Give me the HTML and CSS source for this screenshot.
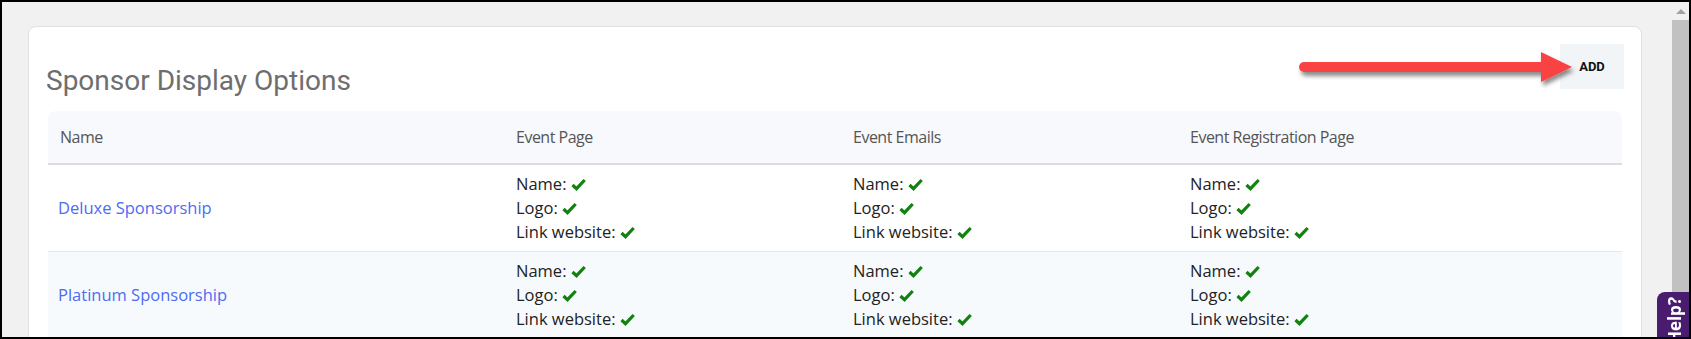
FILE: index.html
```html
<!DOCTYPE html>
<html>
<link rel="stylesheet" href="styles.css">

<head>
    <title>Sponsor Display Options</title>
</head>

<body>

    <div class="Frame">
        <div class="Main">
            <div class="Card">
                <div class="CardHeader">
                    <h2 class="Title">Sponsor Display Options</h2>
                    <button class="AddButton">ADD</button>
                </div>

                <table class="OptionsTable">
                    <colgroup>
                        <col style="width: 456px">
                        <col style="width: 337px">
                        <col style="width: 337px">
                        <col>
                    </colgroup>
                    <thead>
                        <tr>
                            <th>Name</th>
                            <th>Event Page</th>
                            <th>Event Emails</th>
                            <th>Event Registration Page</th>
                        </tr>
                    </thead>
                    <tbody id="OptionsBody"></tbody>
                </table>
            </div>
        </div>

        <div class="Scrollbar">
            <div class="ScrollUp"></div>
            <div class="ScrollThumb"></div>
        </div>

        <svg class="Arrow" width="290" height="44" viewBox="0 0 290 44">
            <defs>
                <filter id="ArrowShadow" x="-10%" y="-40%" width="120%" height="200%">
                    <feDropShadow dx="2" dy="4" stdDeviation="2.2" flood-color="#000" flood-opacity="0.45"/>
                </filter>
            </defs>
            <g filter="url(#ArrowShadow)" fill="#f94242">
                <rect x="4" y="14" width="250" height="10" rx="5"/>
                <polygon points="246,4 277,19 246,34"/>
            </g>
        </svg>

        <div class="HelpTab"><span class="HelpText">Need Help?</span></div>
    </div>

    <script>
        const sponsors = ["Deluxe Sponsorship", "Platinum Sponsorship"];
        const places = 3;
        const OptionsBody = document.getElementById("OptionsBody");

        const check = '<svg class="Check" width="15" height="13" viewBox="0 0 15 13">' +
            '<polyline points="1.5,7 5.5,10.7 13.7,2" fill="none" stroke="#12820f" stroke-width="3.2"/></svg>';

        function optionCell() {
            return `<td class="Options">
                <div>Name: ${check}</div>
                <div>Logo: ${check}</div>
                <div>Link website: ${check}</div>
            </td>`;
        }

        sponsors.forEach(name => {
            const row = document.createElement("tr");
            let html = `<td><a href="#" class="SponsorLink">${name}</a></td>`;
            for (let i = 0; i < places; i++) {
                html += optionCell();
            }
            row.innerHTML = html;
            OptionsBody.appendChild(row);
        });
    </script>

</body>
</html>
```

FILE: styles.css
```css
html, body {
    margin: 0;
    padding: 0;
}

body {
    font-family: "Open Sans", "Liberation Sans", sans-serif;
    background: #f1f1f1;
}

.Frame {
    position: relative;
    display: flex;
    width: 1691px;
    height: 339px;
    box-sizing: border-box;
    border: 2px solid #000;
    overflow: hidden;
    background: #f1f1f1;
}

.Main {
    flex: 1;
    padding: 24px 30px 0 26px;
}

.Card {
    background: #fff;
    border: 1px solid #e1e1e1;
    border-radius: 8px;
    padding: 17px 17px 40px 17px;
}

.CardHeader {
    display: flex;
    justify-content: space-between;
    align-items: flex-start;
}

.Title {
    font-family: Roboto, "Liberation Sans", sans-serif;
    font-weight: 400;
    font-size: 28px;
    line-height: 32px;
    color: #6e6e6e;
    margin: 21px 0 0 0;
}

.AddButton {
    width: 64px;
    height: 45px;
    border: none;
    background: #f2f5f8;
    font-family: Roboto, "Liberation Sans", sans-serif;
    font-weight: 700;
    font-size: 13px;
    color: #111;
    padding: 0;
}

.OptionsTable {
    width: calc(100% - 4px);
    margin: 14px 2px 0 2px;
    table-layout: fixed;
    border-collapse: separate;
    border-spacing: 0;
    font-size: 16.5px;
}

.OptionsTable th {
    background: #f7f9fc;
    font-weight: 400;
    font-size: 16px;
    color: #555;
    text-align: left;
    height: 54px;
    padding: 0 12px;
    box-sizing: border-box;
    border-bottom: 2px solid #dcdcdc;
    letter-spacing: -0.5px;
}

.OptionsTable th:first-child {
    border-top-left-radius: 8px;
}

.OptionsTable th:last-child {
    border-top-right-radius: 8px;
}

.OptionsTable td {
    padding: 7px 12px;
    border-bottom: 1px solid #e8e8e8;
    vertical-align: middle;
    color: #222;
    line-height: 24px;
}

.OptionsTable tbody tr:nth-child(even) td {
    background: #f7fafd;
}

.SponsorLink {
    color: #4d6cf2;
    text-decoration: none;
    margin-left: -2px;
}

.Check {
    vertical-align: -1px;
}

.Scrollbar {
    width: 17px;
    display: flex;
    flex-direction: column;
    background: #f1f1f1;
}

.ScrollUp {
    height: 18px;
    display: flex;
    justify-content: center;
    align-items: center;
}

.ScrollUp::before {
    content: "";
    border-left: 5px solid transparent;
    border-right: 5px solid transparent;
    border-bottom: 5px solid #a3a3a3;
}

.ScrollThumb {
    flex: 1;
    background: #c1c1c1;
}

/* annotation overlay */
.Arrow {
    position: absolute;
    left: 1293px;
    top: 46px;
}

.HelpTab {
    position: absolute;
    left: 1655px;
    top: 290px;
    width: 34px;
    height: 160px;
    background: #4a1c6f;
    border-top-left-radius: 8px;
    display: flex;
    flex-direction: column;
    align-items: center;
}

.HelpText {
    writing-mode: vertical-rl;
    transform: rotate(180deg);
    color: #fff;
    font-weight: 700;
    font-size: 17px;
    margin-top: 5px;
}
```
